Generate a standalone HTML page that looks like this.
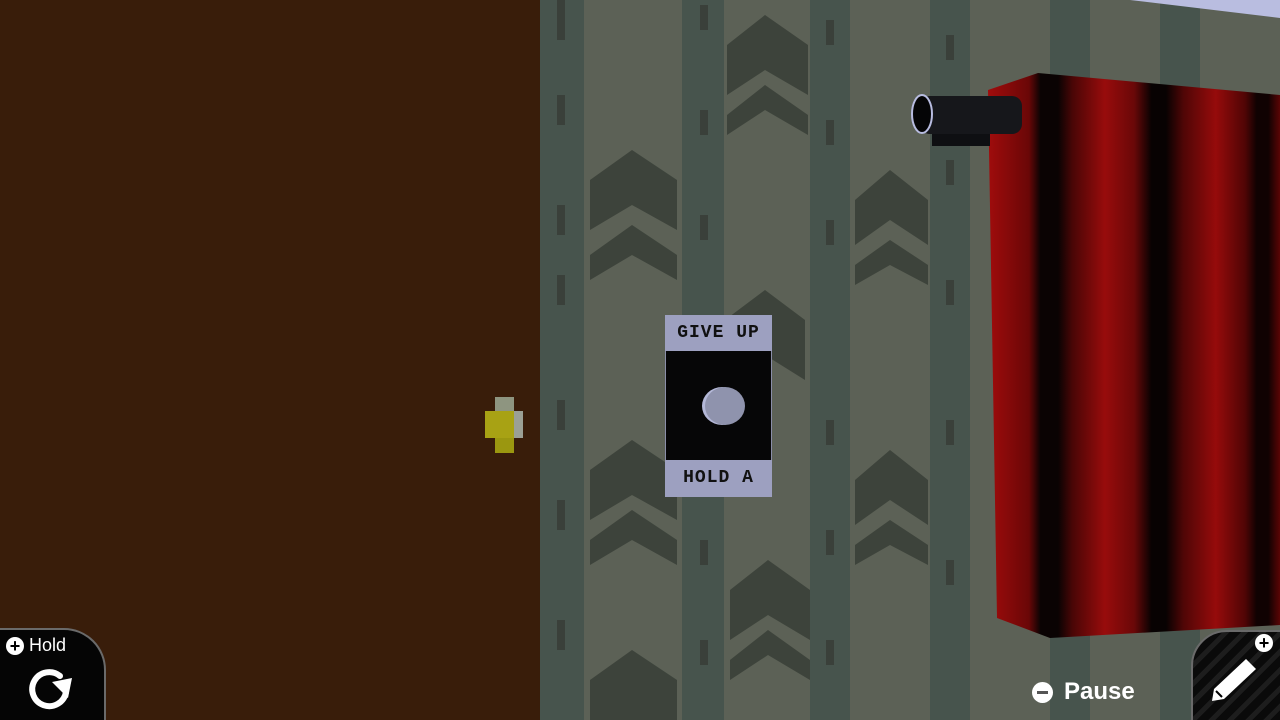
<!DOCTYPE html>
<html><head><style>
*{margin:0;padding:0;box-sizing:border-box}
html,body{width:1280px;height:720px;overflow:hidden}
body{position:relative;background:#5c6156;font-family:"Liberation Sans",sans-serif}
.a{position:absolute}
.stripe{position:absolute;top:0;height:720px;background:#47544d}
</style></head><body>
<div class="a" style="left:0;top:0;width:540px;height:720px;background:#391d0a"></div>
<div class="stripe" style="left:540px;width:44px"></div>
<div class="stripe" style="left:682px;width:42px"></div>
<div class="stripe" style="left:810px;width:40px"></div>
<div class="stripe" style="left:930px;width:40px"></div>
<div class="stripe" style="left:1050px;width:40px"></div>
<div class="stripe" style="left:1160px;width:40px"></div>
<svg class="a" style="left:0;top:0" width="1280" height="720">
<g fill="#3d433b">
<path d="M590 180 L632 150 L677 180 L677 230 L632 205 L590 230Z M590 255 L632 225 L677 255 L677 280 L632 255 L590 280Z"/>
<path d="M727 45 L765 15 L808 45 L808 95 L765 70 L727 95Z M727 115 L765 85 L808 115 L808 135 L765 110 L727 135Z"/>
<path d="M855 200 L890 170 L928 200 L928 245 L890 220 L855 245Z M855 265 L890 240 L928 265 L928 285 L890 265 L855 285Z"/>
<path d="M590 470 L632 440 L677 470 L677 520 L632 495 L590 520Z M590 540 L632 510 L677 540 L677 565 L632 540 L590 565Z"/>
<path d="M730 590 L768 560 L810 590 L810 640 L768 615 L730 640Z M730 660 L768 630 L810 660 L810 680 L768 655 L730 680Z"/>
<path d="M855 480 L890 450 L928 480 L928 525 L890 500 L855 525Z M855 545 L890 520 L928 545 L928 565 L890 545 L855 565Z"/>
<path d="M725 320 L765 290 L805 320 L805 380 L765 355 L725 380Z"/>
<path d="M590 680 L632 650 L677 680 L677 720 L590 720Z"/>
</g>
<g fill="#3a403a">
<rect x="557" y="0" width="8" height="40"/><rect x="557" y="95" width="8" height="30"/><rect x="557" y="205" width="8" height="30"/><rect x="557" y="275" width="8" height="30"/><rect x="557" y="400" width="8" height="30"/><rect x="557" y="500" width="8" height="30"/><rect x="557" y="620" width="8" height="30"/>
<rect x="700" y="5" width="8" height="25"/><rect x="700" y="110" width="8" height="25"/><rect x="700" y="215" width="8" height="25"/><rect x="700" y="420" width="8" height="25"/><rect x="700" y="540" width="8" height="25"/><rect x="700" y="640" width="8" height="25"/>
<rect x="826" y="20" width="8" height="25"/><rect x="826" y="120" width="8" height="25"/><rect x="826" y="220" width="8" height="25"/><rect x="826" y="420" width="8" height="25"/><rect x="826" y="530" width="8" height="25"/><rect x="826" y="640" width="8" height="25"/>
<rect x="946" y="35" width="8" height="25"/><rect x="946" y="160" width="8" height="25"/><rect x="946" y="280" width="8" height="25"/><rect x="946" y="420" width="8" height="25"/><rect x="946" y="560" width="8" height="25"/>
</g>
<path d="M1130 0 L1280 0 L1280 18 Z" fill="#b9bde0"/>
<defs><linearGradient id="c" gradientUnits="userSpaceOnUse" x1="988" x2="1280" y1="0" y2="0">
<stop offset="0" stop-color="#a00c0c"/><stop offset="0.14" stop-color="#6a0707"/><stop offset="0.18" stop-color="#0a0303"/><stop offset="0.24" stop-color="#0a0303"/><stop offset="0.29" stop-color="#4a0606"/><stop offset="0.4" stop-color="#980c0c"/><stop offset="0.5" stop-color="#6a0808"/><stop offset="0.56" stop-color="#080202"/><stop offset="0.61" stop-color="#080202"/><stop offset="0.67" stop-color="#500606"/><stop offset="0.78" stop-color="#960b0b"/><stop offset="0.88" stop-color="#500505"/><stop offset="0.92" stop-color="#100202"/><stop offset="0.96" stop-color="#100202"/><stop offset="1" stop-color="#5a0505"/>
</linearGradient></defs>
<path d="M988 90 L1038 73 L1280 95 L1280 625 L1050 638 L997 618 Z" fill="url(#c)"/>
<path d="M932 128 L990 128 L990 146 L932 146Z" fill="#0e0f12"/>
<rect x="920" y="96" width="102" height="38" rx="10" fill="#16171b"/>
<ellipse cx="922" cy="114" rx="10" ry="19" fill="#050506" stroke="#b8bce0" stroke-width="2"/>
</svg>
<div class="a" style="left:495px;top:397px;width:19px;height:56px;background:#9b9710"></div>
<div class="a" style="left:495px;top:397px;width:19px;height:14px;background:#8e9580"></div>
<div class="a" style="left:485px;top:411px;width:38px;height:27px;background:#a8a214"></div>
<div class="a" style="left:514px;top:411px;width:9px;height:27px;background:#9ba095"></div>
<div class="a" style="left:665px;top:315px;width:107px;height:182px;background:#060607;border:1px solid #8a8ea8"></div>
<div class="a" style="left:665px;top:315px;width:107px;height:36px;background:#9da0c0;font:bold 18px 'Liberation Mono',monospace;color:#111;text-align:center;line-height:36px;letter-spacing:1px">GIVE UP</div>
<div class="a" style="left:665px;top:460px;width:107px;height:37px;background:#9da0c0;font:bold 18px 'Liberation Mono',monospace;color:#111;text-align:center;line-height:37px;letter-spacing:1px">HOLD A</div>
<div class="a" style="left:705px;top:387px;width:40px;height:38px;border-radius:50%;background:#8f93ad;box-shadow:-3px 0 0 #b4b8d8"></div>
<div class="a" style="left:-4px;top:628px;width:110px;height:96px;background:#050505;border:2px solid #6a6a6a;border-radius:0 42px 0 0"></div>
<div class="a" style="left:6px;top:637px;width:18px;height:18px;border-radius:50%;background:#fff;color:#000;font:bold 18px/18px 'Liberation Sans';text-align:center">+</div>
<div class="a" style="left:29px;top:635px;color:#fff;font-size:18px">Hold</div>
<svg class="a" style="left:26px;top:664px" width="54" height="48"><path d="M34 12 A17 17 0 1 0 40 28" fill="none" stroke="#fff" stroke-width="6" stroke-linecap="round"/><path d="M26 18 L46 14 L42 34Z" fill="#fff"/></svg>
<div class="a" style="left:1032px;top:682px;width:21px;height:21px;border-radius:50%;background:#fff"></div>
<div class="a" style="left:1037px;top:691px;width:11px;height:3px;background:#555"></div>
<div class="a" style="left:1064px;top:678px;color:#fff;font:bold 24px 'Liberation Sans'">Pause</div>
<div class="a" style="left:1191px;top:630px;width:95px;height:95px;background:repeating-linear-gradient(135deg,#0a0a0a 0 8px,#1d1d1d 8px 13px);border:2px solid #6a6a6a;border-radius:36px 0 0 0"></div>
<div class="a" style="left:1255px;top:634px;width:18px;height:18px;border-radius:50%;background:#fff;color:#000;font:bold 18px/18px 'Liberation Sans';text-align:center">+</div>
<svg class="a" style="left:1208px;top:655px" width="50" height="50"><path d="M38 4 L48 14 L16 44 L4 46 L6 34 Z" fill="#fff"/><path d="M8 36 L14 42" stroke="#000" stroke-width="2"/></svg>
</body></html>
